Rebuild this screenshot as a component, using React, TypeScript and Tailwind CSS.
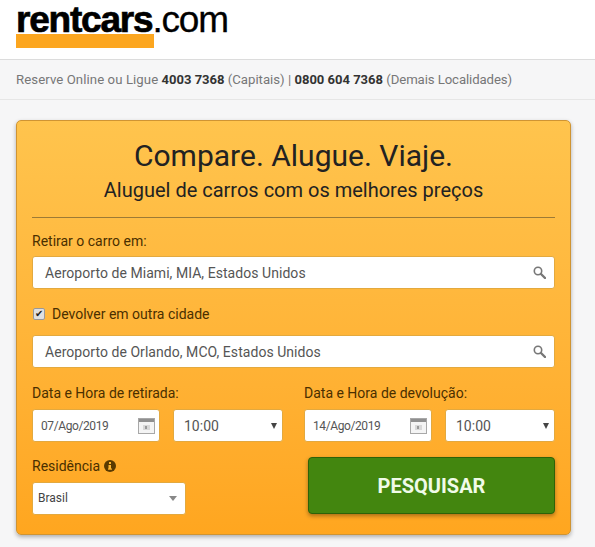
function SearchIcon() {
  return (
    <svg width="13" height="13" viewBox="0 0 13 13" fill="none" className="shrink-0">
      <circle cx="5" cy="5" r="3.7" stroke="#777" strokeWidth="1.6" />
      <path d="M8 8l4 4" stroke="#777" strokeWidth="2.4" strokeLinecap="round" />
    </svg>
  )
}

function InfoIcon() {
  return (
    <svg width="12" height="12" viewBox="0 0 12 12" className="shrink-0">
      <circle cx="6" cy="6" r="6" fill="#5a3a00" />
      <rect x="5" y="2" width="2" height="2" fill="#ffb52e" />
      <rect x="4.5" y="5" width="2.5" height="4" fill="#ffb52e" />
      <rect x="4" y="8.5" width="4" height="1.2" fill="#ffb52e" />
    </svg>
  )
}

function CalendarIcon() {
  return (
    <svg width="17" height="16" viewBox="0 0 17 16" className="shrink-0">
      <rect x="0.5" y="0.5" width="16" height="15" fill="#f4f4f4" stroke="#a8a8a8" />
      <rect x="1" y="1" width="15" height="3" fill="#8f8f8f" />
      <rect x="5" y="7" width="7" height="5" fill="#d8d8d8" />
      <rect x="7" y="8" width="2" height="3" fill="#999" />
    </svg>
  )
}

function PlaceInput({ value }: { value: string }) {
  return (
    <div className="flex h-[33px] items-center justify-between rounded-[3px] border border-[#e3a93f] bg-white pl-3 pr-2 text-sm tracking-[0.05px] text-[#555]">
      <span>{value}</span>
      <SearchIcon />
    </div>
  )
}

function DateTime({ label, date }: { label: string; date: string }) {
  return (
    <div className="w-[251px]">
      <div className="mb-2 h-4 text-sm leading-4 text-[#4a2f00]">{label}</div>
      <div className="flex gap-[13px]">
        <div className="flex h-[33px] w-[128px] items-center justify-between rounded-[3px] border border-[#e3a93f] bg-white pl-2 pr-[4px] text-xs tracking-[-0.4px] text-[#555]">
          <span>{date}</span>
          <CalendarIcon />
        </div>
        <div className="flex h-[33px] w-[110px] items-center justify-between rounded-[3px] border border-[#e3a93f] bg-white pl-[10px] pr-[5px] text-sm text-[#555]">
          <span>10:00</span>
          <span className="h-0 w-0 border-x-[3.5px] border-t-[6px] border-x-transparent border-t-[#444]" />
        </div>
      </div>
    </div>
  )
}

export default function App() {
  return (
    <div className="h-[547px] w-[595px] overflow-hidden bg-[#f6f6f7] font-['Roboto',sans-serif]">
      <header className="h-[60px] border-b border-[#dcdcdc] bg-white pl-4">
        <div className="w-fit font-['Liberation_Sans',sans-serif] text-[37px] leading-[39px] tracking-[-1.2px] text-black">
          <span className="font-bold [-webkit-text-stroke:0.7px_black]">rentcars</span>
          <span className="[-webkit-text-stroke:0.3px_black]">.com</span>
        </div>
        <div className="-mt-[5px] h-[14px] w-[138px] bg-[#fca61f]" />
      </header>

      <div className="flex h-10 items-center border-b border-[#e6e6e6] pl-4 text-[13.2px] text-[#777]">
        <span className="tracking-[0.08px]">Reserve Online ou Ligue</span>&nbsp;<strong className="text-[13px] font-bold text-[#333]">4003 7368</strong>&nbsp;(Capitais) |&nbsp;
        <strong className="text-[13px] font-bold text-[#333]">0800 604 7368</strong>&nbsp;<span className="tracking-[-0.1px]">(Demais Localidades)</span>
      </div>

      <main className="ml-4 mt-5 h-[415px] w-[555px] rounded-[5px] border border-[#cf9433] bg-gradient-to-b from-[#ffc44d] to-[#ffa61f] px-[15px] pt-[17px] shadow-[0_2px_4px_rgba(0,0,0,0.3)]">
        <h1 className="text-center text-[30px] leading-9 text-[#222]">Compare. Alugue. Viaje.</h1>
        <h2 className="mt-1 text-center text-xl leading-6 text-[#222]">Aluguel de carros com os melhores preços</h2>
        <hr className="mt-[15px] border-[#9d7a35]" />

        <div className="mb-[7px] mt-[15px] h-4 text-sm leading-4 text-[#4a2f00]">Retirar o carro em:</div>
        <PlaceInput value="Aeroporto de Miami, MIA, Estados Unidos" />

        <label className="mb-[13px] mt-[17px] flex h-4 items-center gap-[7px] text-sm text-[#4a2f00]">
          <span className="ml-px flex h-3 w-3 items-center justify-center rounded-[2px] border border-[#999] bg-[#e0e0e0] text-[10px] leading-none text-[#222]">✔</span>
          Devolver em outra cidade
        </label>
        <PlaceInput value="Aeroporto de Orlando, MCO, Estados Unidos" />

        <div className="mt-[17px] flex justify-between">
          <DateTime label="Data e Hora de retirada:" date="07/Ago/2019" />
          <DateTime label="Data e Hora de devolução:" date="14/Ago/2019" />
        </div>

        <div className="mt-4 flex items-start justify-between">
          <div>
            <div className="mb-2 flex h-4 items-center gap-1 text-sm text-[#4a2f00]">
              Residência
              <InfoIcon />
            </div>
            <div className="flex h-[33px] w-[154px] items-center justify-between rounded-[3px] border border-[#e3a93f] bg-white pl-[5px] pr-[8px] text-xs text-[#444]">
              <span className="pb-[2px]">Brasil</span>
              <span className="h-0 w-0 border-x-[4px] border-t-[5px] border-x-transparent border-t-[#888]" />
            </div>
          </div>
          <button className="-mt-px h-[57px] w-[247px] rounded-[4px] border border-[#2e6208] bg-[#43860f] text-xl font-bold text-[#f0fbe8] shadow-[0_2px_4px_rgba(0,0,0,0.35)]">
            PESQUISAR
          </button>
        </div>
      </main>
    </div>
  )
}
